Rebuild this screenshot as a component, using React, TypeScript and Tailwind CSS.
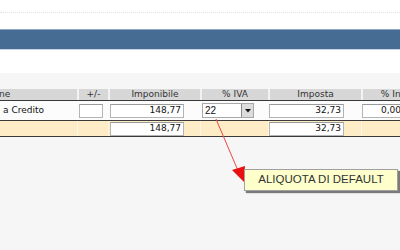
import React from 'react';

const cols = [
  { key: 'desc', label: 'Descrizione', w: 'w-[77px]' },
  { key: 'sign', label: '+/-', w: 'w-[31px]' },
  { key: 'imp', label: 'Imponibile', w: 'w-[92px]' },
  { key: 'iva', label: '% IVA', w: 'w-[68px]' },
  { key: 'tax', label: 'Imposta', w: 'w-[93px]' },
  { key: 'ind', label: '% Ind.', w: 'w-[66px]' },
];

const NumInput: React.FC<{ value?: string; className?: string }> = ({ value = '', className = '' }) => (
  <div
    className={`h-[14px] bg-white border border-[#b4b4b4] border-t-[#9a9a9a] flex items-center justify-end pr-[2px] text-[9px] leading-none text-[#111] ${className}`}
  >
    {value}
  </div>
);

const App: React.FC = () => {
  return (
    <div className="relative w-[400px] h-[250px] overflow-hidden bg-[#f6f6f6] font-['DejaVu_Sans',sans-serif]">
      {/* top area */}
      <div className="bg-white h-[73px] pt-[12px]">
        <div className="border-t border-dotted border-[#e2e2e2]" />
        <div className="mt-[16px] h-[21px] bg-[#476c93] border-t border-[#8fa9c4] border-b border-b-[#c9d5e2]" />
      </div>

      {/* table */}
      <div className="mt-[16px] w-[420px]">
        {/* header */}
        <div className="flex h-[12px] bg-[#d7d7d7] border-b border-[#3a3a3a] text-[9px] leading-[11px] text-[#333]">
          {cols.map((c, i) => (
            <div
              key={c.key}
              className={`${c.w} shrink-0 overflow-hidden whitespace-nowrap ${i > 0 ? 'border-l-2 border-[#f2f2f2] text-center' : ''}`}
            >
              {i === 0 ? <span className="inline-block -ml-[42px]">Descrizione</span> : c.label}
            </div>
          ))}
        </div>

        {/* data row */}
        <div className="flex h-[20px] bg-[#fcfcfc] border-b border-[#3a3a3a] items-center">
          <div className="w-[77px] shrink-0 overflow-hidden whitespace-nowrap text-[9px] text-[#111] pl-[3px]">
            a Credito
          </div>
          <div className="w-[31px] shrink-0 pl-[2px]">
            <NumInput className="w-[24px]" />
          </div>
          <div className="w-[92px] shrink-0 pl-[2px]">
            <NumInput value="148,77" className="w-[74px]" />
          </div>
          <div className="w-[68px] shrink-0 pl-[2px]">
            <div className="w-[52px] h-[15px] bg-white border border-[#a8a8a8] flex items-center">
              <span className="flex-1 pl-[2px] text-[10px] leading-none font-['Liberation_Sans',sans-serif] text-[#111]">22</span>
              <span className="w-[12px] h-full bg-[#dcdcdc] border-l border-[#8a8a8a] flex items-center justify-center">
                <svg width="6" height="4" viewBox="0 0 6 4">
                  <polygon points="0,0 6,0 3,3.5" fill="#111" />
                </svg>
              </span>
            </div>
          </div>
          <div className="w-[93px] shrink-0 pl-[1px]">
            <NumInput value="32,73" className="w-[75px]" />
          </div>
          <div className="w-[66px] shrink-0 pl-[1px]">
            <NumInput value="0,00" className="w-[42px]" />
          </div>
        </div>

        {/* totals row */}
        <div className="flex h-[16px] bg-[#feecc6] border-b border-[#3a3a3a] items-center">
          <div className="w-[77px] shrink-0 h-full" />
          <div className="w-[31px] shrink-0 h-full border-l border-[#fff6e2]" />
          <div className="w-[92px] shrink-0 h-full border-l border-[#fff6e2] pl-[1px] flex items-center">
            <NumInput value="148,77" className="w-[74px] h-[13px]" />
          </div>
          <div className="w-[68px] shrink-0 h-full border-l border-[#fff6e2]" />
          <div className="w-[93px] shrink-0 h-full border-l border-[#fff6e2] flex items-center">
            <NumInput value="32,73" className="w-[75px] h-[13px]" />
          </div>
          <div className="w-[66px] shrink-0 h-full border-l border-[#fff6e2]" />
        </div>
      </div>

      {/* annotation arrow */}
      <svg className="absolute left-0 top-0 pointer-events-none" width="400" height="250">
        <line x1="216" y1="119" x2="239" y2="173" stroke="#f04545" strokeWidth="1" />
        <polygon points="244,182 232,170 245,166" fill="#e81010" />
      </svg>

      {/* tooltip */}
      <div className="absolute left-[244px] top-[169px] w-[154px] h-[22px] bg-[#ffffcc] border border-[#a0a0a0] shadow-[2px_2px_1px_#7a7a7a] flex items-center justify-center text-[11.5px] text-[#333] font-['Liberation_Sans',sans-serif]">
        ALIQUOTA DI DEFAULT
      </div>
    </div>
  );
};

export default App;
